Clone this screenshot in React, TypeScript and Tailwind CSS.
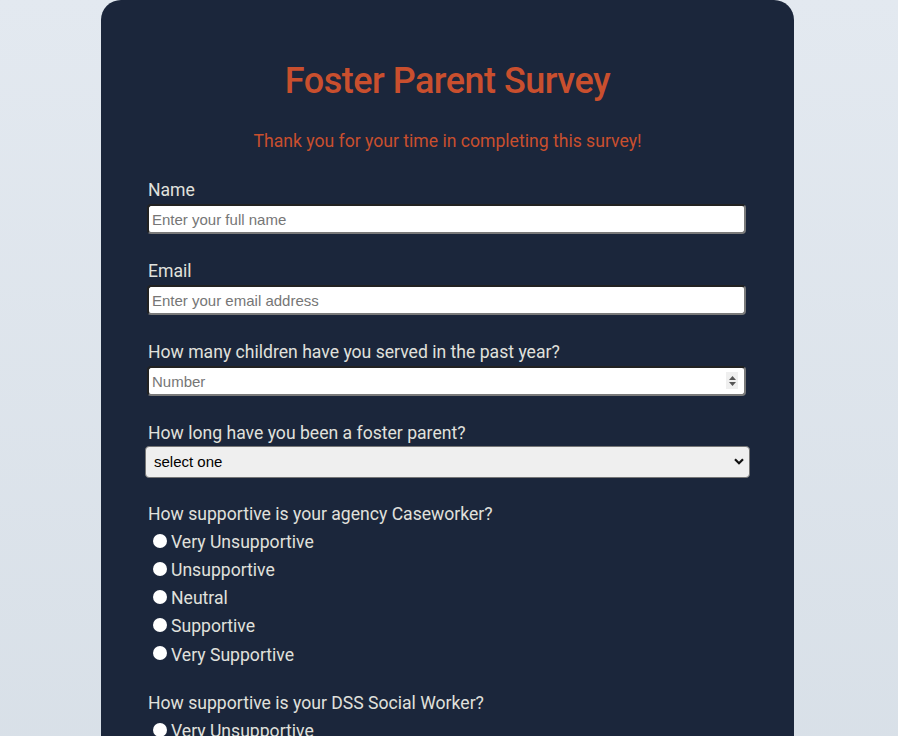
import React from 'react';

const SCALE = ['Very Unsupportive', 'Unsupportive', 'Neutral', 'Supportive', 'Very Supportive'];

const inputCls =
  'block w-[599px] h-[30px] px-[3px] bg-white rounded-[4px] border-2 border-t-[#222] border-l-[#222] border-b-[#7a7a7a] border-r-[#7a7a7a] text-[15px] text-black placeholder:text-[#767676] outline-none';

const Label: React.FC<{ children: React.ReactNode }> = ({ children }) => (
  <label className="block pl-[1px] text-[17.6px] leading-[22px] text-[#e0e1dd]">{children}</label>
);

const RadioGroup: React.FC<{ name: string; question: string }> = ({ name, question }) => (
  <div className="mb-[23px]">
    <Label>{question}</Label>
    <div className="mt-[3px]">
      {SCALE.map(opt => (
        <label key={opt} className="flex items-center h-[28.2px] pl-[6px] text-[17.6px] text-[#e0e1dd]">
          <input
            type="radio"
            name={name}
            className="appearance-none w-[14px] h-[14px] rounded-full bg-white mr-[4px] -mt-[3px] shrink-0"
          />
          <span>{opt}</span>
        </label>
      ))}
    </div>
  </div>
);

export default function App() {
  return (
    <div
      className="min-h-screen bg-gradient-to-b from-[#e3e9f0] to-[#d6dee6] flex justify-center"
      style={{ fontFamily: 'Roboto, "Liberation Sans", sans-serif' }}
    >
      <div className="w-[693px] ml-[-3px] bg-[#1b263b] rounded-[20px] px-[46px] pt-[58px] pb-10">
        <h1 className="text-center text-[36px] leading-[46px] font-medium text-[#c94f2e] tracking-[-0.5px]">
          Foster Parent Survey
        </h1>
        <p className="text-center text-[17.6px] leading-[22px] text-[#c94f2e] mt-[26px] mb-[27px]">
          Thank you for your time in completing this survey!
        </p>

        <form>
          <div className="mb-[26px]">
            <Label>Name</Label>
            <input
              type="text"
              placeholder="Enter your full name"
              className={`${inputCls} mt-[3px]`}
              style={{ fontFamily: '"Liberation Sans", Arial, sans-serif' }}
            />
          </div>

          <div className="mb-[26px]">
            <Label>Email</Label>
            <input
              type="email"
              placeholder="Enter your email address"
              className={`${inputCls} mt-[3px]`}
              style={{ fontFamily: '"Liberation Sans", Arial, sans-serif' }}
            />
          </div>

          <div className="mb-[26px]">
            <Label>How many children have you served in the past year?</Label>
            <div className="relative mt-[3px] w-[599px]">
              <input
                type="text"
                placeholder="Number"
                className={inputCls}
                style={{ fontFamily: '"Liberation Sans", Arial, sans-serif' }}
              />
              <div className="absolute right-[8px] top-[6px] w-[12px] h-[17px] bg-[#efefef] flex flex-col items-center justify-center gap-[2px]">
                <svg width="7" height="4" viewBox="0 0 7 4"><path d="M0 4L3.5 0L7 4Z" fill="#555" /></svg>
                <svg width="7" height="4" viewBox="0 0 7 4"><path d="M0 0L3.5 4L7 0Z" fill="#555" /></svg>
              </div>
            </div>
          </div>

          <div className="mb-[25px]">
            <Label>How long have you been a foster parent?</Label>
            <div className="relative mt-[2px] -ml-[2px] w-[605px]">
              <select
                className="block appearance-none w-[605px] h-[32px] pl-[8px] bg-[#efefef] rounded-[4px] border border-[#767676] text-[15px] text-black outline-none"
                style={{ fontFamily: '"Liberation Sans", Arial, sans-serif' }}
                defaultValue=""
              >
                <option value="">select one</option>
                <option>Less than 1 year</option>
                <option>1-3 years</option>
                <option>3-5 years</option>
                <option>More than 5 years</option>
              </select>
              <svg className="absolute right-[6px] top-[12px]" width="10" height="7" viewBox="0 0 10 7">
                <path d="M1 1.2L5 5.2L9 1.2" stroke="#111" strokeWidth="2.2" fill="none" />
              </svg>
            </div>
          </div>

          <RadioGroup name="caseworker" question="How supportive is your agency Caseworker?" />
          <RadioGroup name="dss" question="How supportive is your DSS Social Worker?" />
        </form>
      </div>
    </div>
  );
}
